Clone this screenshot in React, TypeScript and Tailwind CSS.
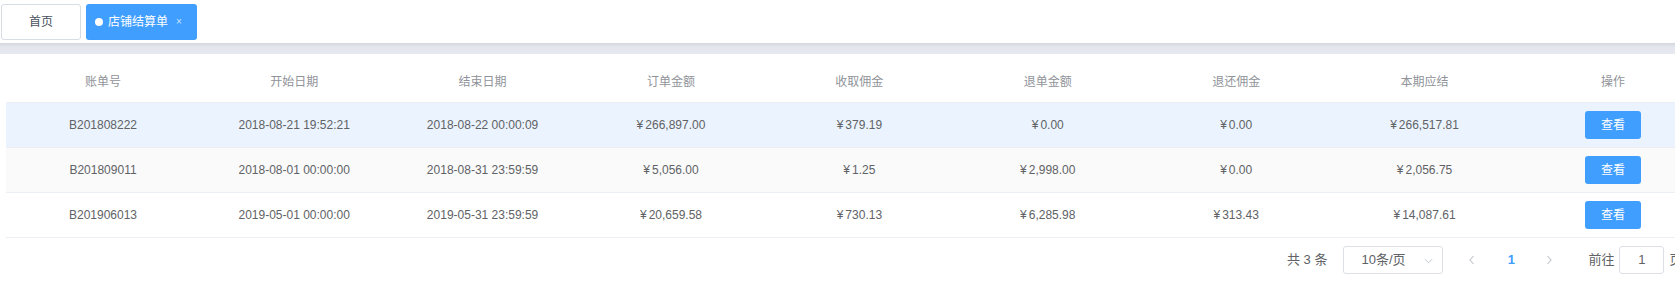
import React from "react";

const cols = ["账单号", "开始日期", "结束日期", "订单金额", "收取佣金", "退单金额", "退还佣金", "本期应结", "操作"];

const rows = [
  ["B201808222", "2018-08-21 19:52:21", "2018-08-22 00:00:09", "¥266,897.00", "¥379.19", "¥0.00", "¥0.00", "¥266,517.81"],
  ["B201809011", "2018-08-01 00:00:00", "2018-08-31 23:59:59", "¥5,056.00", "¥1.25", "¥2,998.00", "¥0.00", "¥2,056.75"],
  ["B201906013", "2019-05-01 00:00:00", "2019-05-31 23:59:59", "¥20,659.58", "¥730.13", "¥6,285.98", "¥313.43", "¥14,087.61"],
];

const rowBg = ["bg-[#ebf4fe]", "bg-[#fafafa]", "bg-white"];

function Cell({ i, children }: { i: number; children: React.ReactNode }) {
  return (
    <div className={`${i === 0 ? "w-[194px]" : "w-[188.4px]"} shrink-0 flex items-center justify-center`}>
      {children}
    </div>
  );
}

function Value({ v }: { v: string }) {
  if (v.startsWith("¥")) {
    return (
      <span>
        <span className="mr-[2px]">¥</span>
        {v.slice(1)}
      </span>
    );
  }
  return <span>{v}</span>;
}

export default function App() {
  return (
    <div className="w-full h-[288px] overflow-hidden bg-white font-['Liberation_Sans','Noto_Sans_CJK_SC',sans-serif]">
      <div className="w-[1712px]">
        {/* tab bar */}
        <div className="h-[43px] flex items-start pt-[4px] pl-[1px] gap-[5px]">
          <div className="h-[36px] w-[80px] border border-[#d8dce5] rounded-[3px] flex items-center justify-center text-[12px] text-[#495060]">
            首页
          </div>
          <div className="h-[36px] w-[111px] bg-[#409eff] rounded-[3px] flex items-center pl-[9px] text-[12px] text-white">
            <span className="w-[8px] h-[8px] rounded-full bg-white mr-[5px]" />
            <span>店铺结算单</span>
            <span className="ml-[8px] text-[10px] text-[#cfe4ff] leading-none">×</span>
          </div>
        </div>
        <div className="h-[11px] bg-[linear-gradient(#d3d7dd,#e3e7ed_35%,#e6e9ef)]" />
        {/* table */}
        <div className="pl-[6px] pt-[7px]">
          <div className="flex h-[42px] border-b border-[#ebeef5] text-[12px] text-[#909399]">
            {cols.map((c, i) => (
              <Cell key={c} i={i}>{c}</Cell>
            ))}
          </div>
          {rows.map((r, ri) => (
            <div key={ri} className={`flex h-[45px] border-b border-[#ebeef5] text-[12px] text-[#606266] ${rowBg[ri]}`}>
              {r.map((v, i) => (
                <Cell key={i} i={i}>
                  <Value v={v} />
                </Cell>
              ))}
              <Cell i={8}>
                <button className="w-[56px] h-[28px] rounded-[3px] bg-[#409eff] text-white text-[12px]">查看</button>
              </Cell>
            </div>
          ))}
          {/* pagination */}
          <div className="flex items-center h-[28px] mt-[8px] pl-[1281px] text-[13px] text-[#606266]">
            <span className="whitespace-pre">共 3 条</span>
            <div className="ml-[16px] w-[100px] h-[28px] border border-[#dcdfe6] rounded-[3px] flex items-center pl-[17px] pr-[8px] justify-between">
              <span>10条/页</span>
              <svg width="11" height="11" viewBox="0 0 12 12" fill="none" stroke="#c0c4cc" strokeWidth="1">
                <path d="M2 4.5l4 4 4-4" />
              </svg>
            </div>
            <div className="ml-[14px] w-[30px] flex justify-center">
              <svg width="10" height="12" viewBox="0 0 10 12" fill="none" stroke="#c0c4cc" strokeWidth="1.1">
                <path d="M6.5 2L3 6l3.5 4" />
              </svg>
            </div>
            <div className="w-[48px] text-center text-[#409eff] font-bold">1</div>
            <div className="w-[28px] flex justify-center">
              <svg width="10" height="12" viewBox="0 0 10 12" fill="none" stroke="#c0c4cc" strokeWidth="1.1">
                <path d="M3.5 2L7 6l-3.5 4" />
              </svg>
            </div>
            <span className="ml-[25px]">前往</span>
            <div className="ml-[5px] w-[45px] h-[28px] border border-[#dcdfe6] rounded-[3px] flex items-center justify-center">1</div>
            <span className="ml-[5px]">页</span>
          </div>
        </div>
      </div>
    </div>
  );
}
